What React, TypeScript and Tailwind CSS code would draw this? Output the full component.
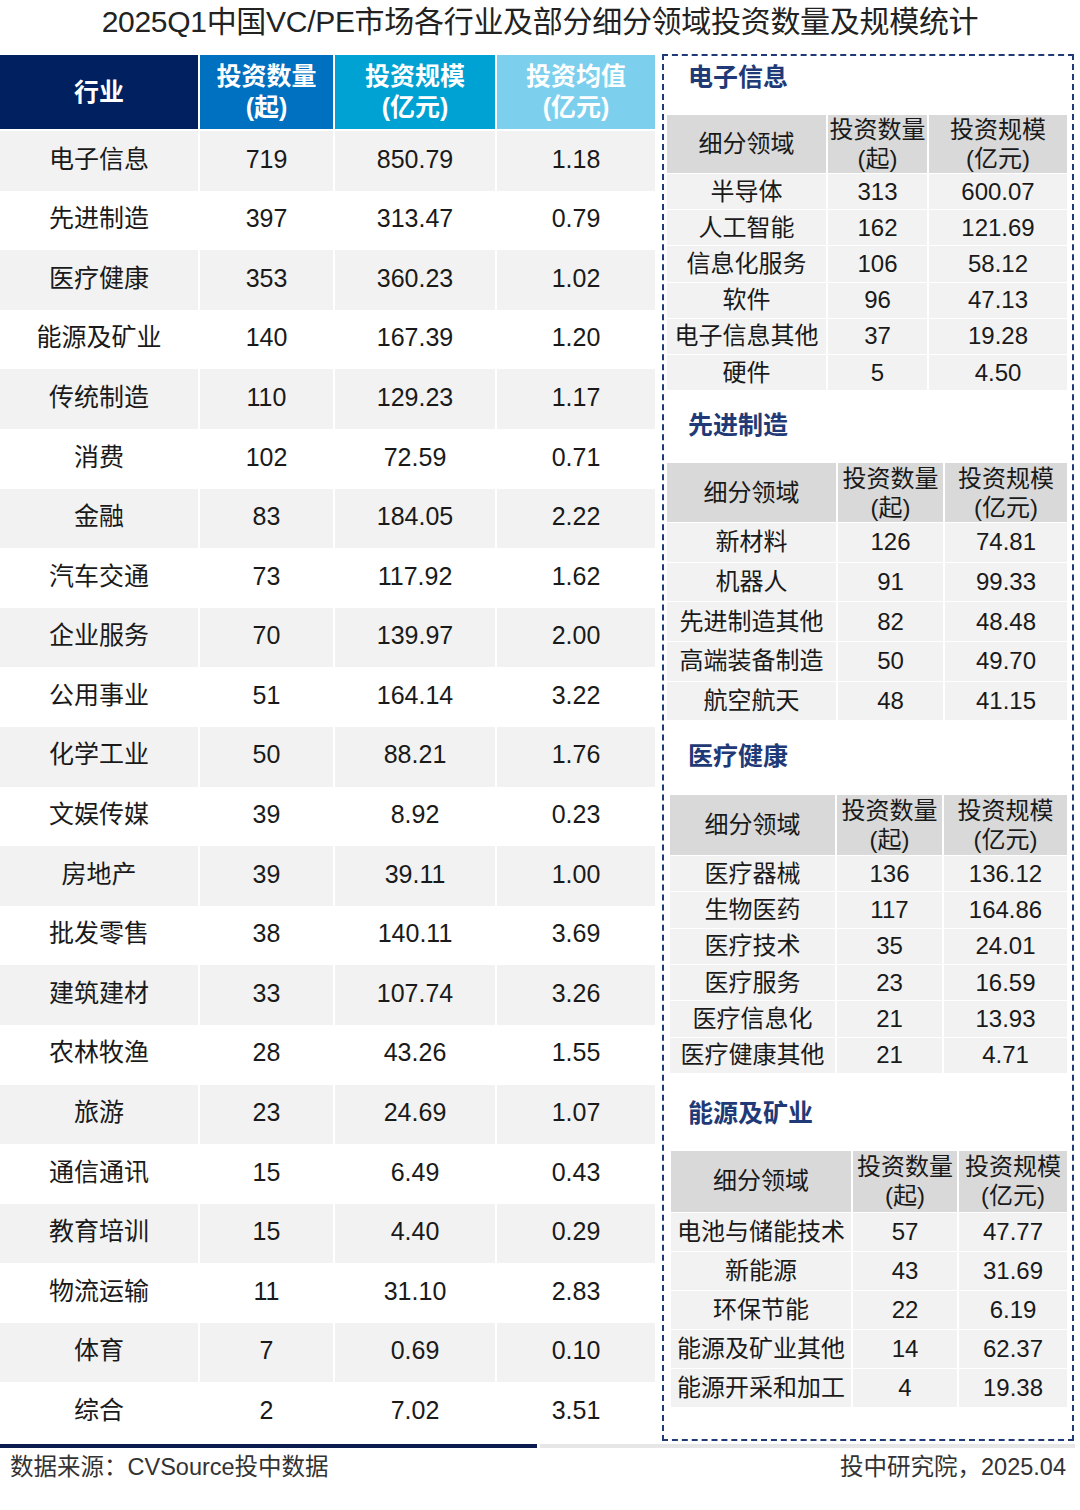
import React from "react";

const rows: [string, string, string, string][] = [
  ["电子信息", "719", "850.79", "1.18"],
  ["先进制造", "397", "313.47", "0.79"],
  ["医疗健康", "353", "360.23", "1.02"],
  ["能源及矿业", "140", "167.39", "1.20"],
  ["传统制造", "110", "129.23", "1.17"],
  ["消费", "102", "72.59", "0.71"],
  ["金融", "83", "184.05", "2.22"],
  ["汽车交通", "73", "117.92", "1.62"],
  ["企业服务", "70", "139.97", "2.00"],
  ["公用事业", "51", "164.14", "3.22"],
  ["化学工业", "50", "88.21", "1.76"],
  ["文娱传媒", "39", "8.92", "0.23"],
  ["房地产", "39", "39.11", "1.00"],
  ["批发零售", "38", "140.11", "3.69"],
  ["建筑建材", "33", "107.74", "3.26"],
  ["农林牧渔", "28", "43.26", "1.55"],
  ["旅游", "23", "24.69", "1.07"],
  ["通信通讯", "15", "6.49", "0.43"],
  ["教育培训", "15", "4.40", "0.29"],
  ["物流运输", "11", "31.10", "2.83"],
  ["体育", "7", "0.69", "0.10"],
  ["综合", "2", "7.02", "3.51"],
];

type Section = {
  title: string;
  titleCls: string;
  tableCls: string;
  headerH: string;
  rowH: string;
  rows: [string, string, string][];
};

const sections: Section[] = [
  {
    title: "电子信息",
    titleCls: "h-[59px] pt-[6px]",
    tableCls: "ml-[3px] grid-cols-[159px_99px_138px]",
    headerH: "h-[58px]",
    rowH: "h-[35.2px]",
    rows: [
      ["半导体", "313", "600.07"],
      ["人工智能", "162", "121.69"],
      ["信息化服务", "106", "58.12"],
      ["软件", "96", "47.13"],
      ["电子信息其他", "37", "19.28"],
      ["硬件", "5", "4.50"],
    ],
  },
  {
    title: "先进制造",
    titleCls: "h-[73px] pt-[20px]",
    tableCls: "ml-[3px] grid-cols-[169px_105px_122px]",
    headerH: "h-[59px]",
    rowH: "h-[38.6px]",
    rows: [
      ["新材料", "126", "74.81"],
      ["机器人", "91", "99.33"],
      ["先进制造其他", "82", "48.48"],
      ["高端装备制造", "50", "49.70"],
      ["航空航天", "48", "41.15"],
    ],
  },
  {
    title: "医疗健康",
    titleCls: "h-[75px] pt-[21px]",
    tableCls: "ml-[6px] grid-cols-[165px_105px_123px]",
    headerH: "h-[60px]",
    rowH: "h-[35.3px]",
    rows: [
      ["医疗器械", "136", "136.12"],
      ["生物医药", "117", "164.86"],
      ["医疗技术", "35", "24.01"],
      ["医疗服务", "23", "16.59"],
      ["医疗信息化", "21", "13.93"],
      ["医疗健康其他", "21", "4.71"],
    ],
  },
  {
    title: "能源及矿业",
    titleCls: "h-[78px] pt-[25px]",
    tableCls: "ml-[7px] grid-cols-[180px_104px_108px]",
    headerH: "h-[61px]",
    rowH: "h-[38px]",
    rows: [
      ["电池与储能技术", "57", "47.77"],
      ["新能源", "43", "31.69"],
      ["环保节能", "22", "6.19"],
      ["能源及矿业其他", "14", "62.37"],
      ["能源开采和加工", "4", "19.38"],
    ],
  },
];

function SubTable({ s }: { s: Section }) {
  return (
    <div>
      <div className={`${s.titleCls} pl-[24px]`}>
        <div className="text-[25px] leading-[30px] font-bold text-[#1f3a76]">{s.title}</div>
      </div>
      <div className={`grid ${s.tableCls} gap-x-[2px] gap-y-[1px] bg-white text-[#1a1a1a]`}>
        <div className={`${s.headerH} bg-[#d9d9d9] flex items-center justify-center text-[24px]`}>细分领域</div>
        <div className={`${s.headerH} bg-[#d9d9d9] flex flex-col items-center justify-center text-[24px] leading-[29px]`}>
          <span>投资数量</span>
          <span>(起)</span>
        </div>
        <div className={`${s.headerH} bg-[#d9d9d9] flex flex-col items-center justify-center text-[24px] leading-[29px]`}>
          <span>投资规模</span>
          <span>(亿元)</span>
        </div>
        {s.rows.map((r, i) => (
          <React.Fragment key={i}>
            <div className={`${s.rowH} bg-[#f2f2f2] flex items-center justify-center text-[24px] whitespace-nowrap`}>{r[0]}</div>
            <div className={`${s.rowH} bg-[#f2f2f2] flex items-center justify-center text-[24px]`}>{r[1]}</div>
            <div className={`${s.rowH} bg-[#f2f2f2] flex items-center justify-center text-[24px]`}>{r[2]}</div>
          </React.Fragment>
        ))}
      </div>
    </div>
  );
}

export default function App() {
  return (
    <div className="w-[1080px] h-[1510px] bg-white font-['Liberation_Sans','Noto_Sans_CJK_SC',sans-serif] text-[#1a1a1a] overflow-hidden">
      <div className="h-[54px] flex items-start justify-center pt-[3px]">
        <div className="text-[30px] leading-[38px] text-[#222] tracking-[-0.3px]">
          2025Q1中国VC/PE市场各行业及部分细分领域投资数量及规模统计
        </div>
      </div>
      <div className="flex items-start">
        <div className="w-[655px] mt-[1px]">
          <div className="grid grid-cols-[198px_133px_160px_158px] gap-x-[2px] text-white font-bold text-[25px] leading-[31px]">
            <div className="h-[74px] bg-[#002060] flex items-center justify-center">行业</div>
            <div className="h-[74px] bg-[#0070c0] flex flex-col items-center justify-center">
              <span>投资数量</span>
              <span>(起)</span>
            </div>
            <div className="h-[74px] bg-[#00a2d3] flex flex-col items-center justify-center">
              <span>投资规模</span>
              <span>(亿元)</span>
            </div>
            <div className="h-[74px] bg-[#7dcfee] flex flex-col items-center justify-center">
              <span>投资均值</span>
              <span>(亿元)</span>
            </div>
          </div>
          <div className="mt-[2px]">
            {rows.map((r, i) => (
              <div
                key={i}
                className="grid grid-cols-[198px_133px_160px_158px] gap-x-[2px] h-[59.6px] text-[25px]"
              >
                {r.map((c, j) => (
                  <div
                    key={j}
                    className={`${i % 2 === 0 ? "bg-[#f2f2f2]" : "bg-white"} flex items-center justify-center pb-[3px]`}
                  >
                    {c}
                  </div>
                ))}
              </div>
            ))}
          </div>
        </div>
        <div className="ml-[7px] w-[412px] h-[1387px] border-2 border-dashed border-[#1f3a76]">
          {sections.map((s, i) => (
            <SubTable key={i} s={s} />
          ))}
        </div>
      </div>
      <div className="flex mt-[2px] h-[4px]">
        <div className="w-[537px] bg-[#0b1a4f]" />
        <div className="w-[535px] ml-[3px] bg-[#e6e6e6]" />
      </div>
      <div className="flex justify-between items-center h-[40px] pl-[10px] pr-[14px] text-[23.5px] text-[#333]">
        <span>数据来源：CVSource投中数据</span>
        <span>投中研究院，2025.04</span>
      </div>
    </div>
  );
}
